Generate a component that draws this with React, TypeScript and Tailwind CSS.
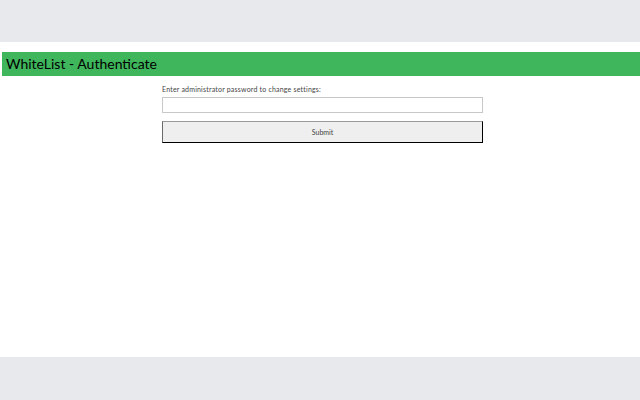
export default function App() {
  return (
    <div className="flex h-[400px] w-[640px] flex-col bg-[#e8e9ed] font-['Lato',sans-serif]">
      <div className="h-[42px] shrink-0" />
      <main className="flex flex-1 flex-col bg-white pt-[10px]">
        <div className="ml-[2px] flex h-[24px] items-center bg-[#3fb65c] pl-[4px]">
          <h1 className="text-[14px] leading-none text-black">WhiteList - Authenticate</h1>
        </div>
        <div className="ml-[162px] mt-[8px] flex w-[321px] flex-col">
          <p className="text-[7px] leading-[10px] tracking-[0.2px] text-[#444]">Enter administrator password to change settings:</p>
          <input type="password" className="mt-[3px] h-[16px] w-full border border-[#c8c8c8] bg-white" />
          <button className="mt-[8px] h-[22px] w-full border border-t-[#9a9a9a] border-l-[#6a6a6a] border-r-black border-b-black bg-[#efefef] text-[7px] text-[#444]">
            Submit
          </button>
        </div>
      </main>
      <div className="h-[43px] shrink-0" />
    </div>
  )
}
